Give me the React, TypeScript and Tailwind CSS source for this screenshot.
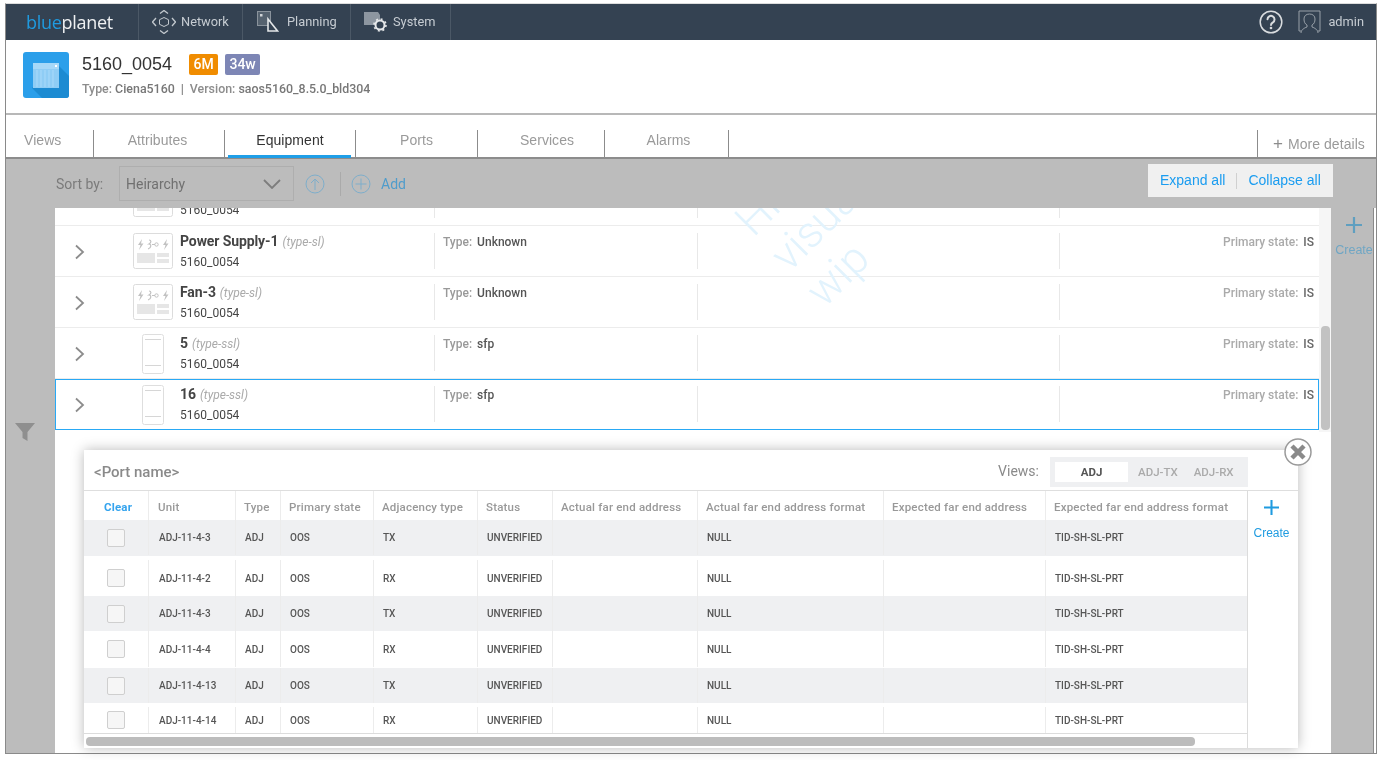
import React from "react";

const roboto = "font-['Roboto',sans-serif]";
const helv = "font-['Liberation_Sans',Arial,sans-serif]";

function NetworkIcon() {
  return (
    <svg width="24" height="24" viewBox="0 0 24 24" fill="none" stroke="#c3c9cf" strokeWidth="1">
      <path d="M12 7.500l4.500 2.200v4.600L12 16.500l-4.500-2.200V9.700z" />
      <path d="M4 8l-3.500 4 3.500 4M20 8l3.500 4-3.500 4M8 3.500l4-3 4 3M8 20.500l4 3 4-3" strokeWidth="1.300" />
    </svg>
  );
}
function PlanningIcon() {
  return (
    <svg width="22" height="22" viewBox="0 0 22 22" fill="none">
      <rect x="0.500" y="0.500" width="13" height="14" fill="#55626f" stroke="#8a939c" />
      <rect x="3" y="3" width="2.500" height="2.500" fill="#cfd3d7" />
      <path d="M11 8v12h9.500z" fill="#344252" stroke="#e3e6e8" strokeWidth="1.600" />
    </svg>
  );
}
function SystemIcon() {
  return (
    <svg width="24" height="22" viewBox="0 0 24 22" fill="none">
      <path d="M0 1h14l2 3h0v10H0z" fill="#8d96a0" />
      <circle cx="16" cy="14" r="4.500" fill="#344252" stroke="#e6e8ea" strokeWidth="2" />
      <circle cx="16" cy="14" r="6" fill="none" stroke="#e6e8ea" strokeWidth="1.600" strokeDasharray="2 2.700" />
    </svg>
  );
}
function HelpIcon() {
  return (
    <svg width="24" height="24" viewBox="0 0 24 24" fill="none" stroke="#d9dcdf" strokeWidth="1.500" strokeLinecap="round">
      <circle cx="12" cy="12" r="10.800" />
      <path d="M8.500 9.300a3.500 3.500 0 1 1 5.400 3c-1.300.800-1.900 1.400-1.900 2.700" strokeWidth="2" />
      <circle cx="12" cy="18" r="0.600" fill="#d9dcdf" />
    </svg>
  );
}
function UserIcon() {
  return (
    <svg width="23" height="24" viewBox="0 0 23 24" fill="none" stroke="#98a0a8" strokeWidth="1">
      <path d="M3 21H1V1h21v20h-2" />
      <path d="M3 23c0-3 3-5 6-6v-2c-2-1-3-3-3-6 0-3 2-5 5.500-5S17 6 17 9c0 3-1 5-3 6v2c3 1 6 3 6 6" />
    </svg>
  );
}
function DeviceBlue() {
  return (
    <svg width="46" height="46" viewBox="0 0 46 46" className="shrink-0">
      <rect width="46" height="46" rx="3" fill="#2b9fea" />
      <path d="M9 36L33 11l13 13v19a3 3 0 0 1-3 3H19z" fill="#1c8bd2" />
      <rect x="10" y="11" width="26" height="25" fill="#8fcdf5" />
      <rect x="10" y="11" width="26" height="6" fill="#a6d8f8" />
      <rect x="32" y="13" width="2" height="2" fill="#fff" />
      <path d="M14 18v17M18 18v17M22 18v17M26 18v17M30 18v17" stroke="#a9dafa" strokeWidth="1" />
    </svg>
  );
}
function Bolt({ x }: { x: number }) {
  return <path d={`M${x + 4} 6l-4 6h2.500l-1.500 5 4.500-6.500h-2.500z`} fill="#c2c2c2" />;
}
function SlotIcon() {
  return (
    <svg width="40" height="36" viewBox="0 0 40 36" className="shrink-0">
      <rect x="0.500" y="0.500" width="39" height="35" rx="2" fill="#fff" stroke="#dcdcdc" />
      <Bolt x={5} />
      <Bolt x={30} />
      <path d="M16 7c2.500 0 2.500 2.500 0 4 2.500 0 2.500 4-1 5M19 11.500h3" stroke="#c2c2c2" fill="none" strokeWidth="1.200" />
      <circle cx="23.500" cy="11.500" r="1.700" fill="none" stroke="#c2c2c2" />
      <rect x="4" y="20" width="18" height="10" fill="#e6e6e6" />
      <rect x="24" y="20" width="12" height="4" fill="#e6e6e6" />
      <rect x="24" y="26" width="12" height="4" fill="#e6e6e6" />
    </svg>
  );
}
function SubSlotIcon() {
  return (
    <svg width="22" height="40" viewBox="0 0 22 40" className="shrink-0">
      <rect x="0.500" y="0.500" width="21" height="39" rx="2" fill="#fff" stroke="#dedede" />
      <path d="M3 5.500h16M3 31.500h16" stroke="#d6d6d6" strokeWidth="1" />
    </svg>
  );
}
function Chevron() {
  return (
    <svg width="12" height="16" viewBox="0 0 12 16" fill="none" stroke="#8c8c8c" strokeWidth="1.800" className="shrink-0">
      <path d="M2 1.500L9 8l-7 6.500" />
    </svg>
  );
}
function PlusMark({ color, size }: { color: string; size: number }) {
  return (
    <svg width={size} height={size} viewBox="0 0 16 16" fill="none" stroke={color} strokeWidth="2.200">
      <path d="M8 0v16M0 8h16" />
    </svg>
  );
}

type Row = { name: string; kind: string; value: string; icon: "slot" | "sub"; selected?: boolean };
const rows: Row[] = [
  { name: "Power Supply-1", kind: "(type-sl)", value: "Unknown", icon: "slot" },
  { name: "Fan-3", kind: "(type-sl)", value: "Unknown", icon: "slot" },
  { name: "5", kind: "(type-ssl)", value: "sfp", icon: "sub" },
  { name: "16", kind: "(type-ssl)", value: "sfp", icon: "sub", selected: true },
];

function ListRow({ row }: { row: Row }) {
  return (
    <div className={"h-[51px] " + (row.selected ? "border border-[#29a9f5]" : "border-b border-[#ececec]")}>
      <div className={"flex h-[51px] items-start " + (row.selected ? "-m-px" : "")}>
        <div className="mt-[18px] w-[78px] shrink-0 pl-[19px]">
          <Chevron />
        </div>
        <div className={`flex w-[40px] shrink-0 justify-center ${row.icon === "slot" ? "mt-[7px]" : "mt-[6px]"}`}>
          {row.icon === "slot" ? <SlotIcon /> : <SubSlotIcon />}
        </div>
        <div className={`w-[261px] shrink-0 pl-[7px] pt-[5px] ${roboto}`}>
          <div className="flex h-[20px] items-baseline gap-[4px]">
            <span className="text-[14px] font-bold tracking-[-0.1px] text-[#444]">{row.name}</span>
            <span className="text-[12px] italic text-[#aaa]">{row.kind}</span>
          </div>
          <div className="mt-[2px] text-[12px] leading-[18px] text-[#444]">5160_0054</div>
        </div>
        <div className={`mt-[7px] flex h-[36px] w-[263px] shrink-0 items-start gap-[5px] border-l border-[#e8e8e8] pl-[8px] pt-[1px] text-[12px] font-medium leading-[16px] ${roboto}`}>
          <span className="text-[#999]">Type:</span>
          <span className="text-[#555]">{row.value}</span>
        </div>
        <div className="mt-[7px] h-[36px] w-[362px] shrink-0 border-l border-[#e8e8e8]" />
        <div className={`mt-[7px] flex h-[36px] flex-1 items-start justify-end gap-[5px] border-l border-[#e8e8e8] pr-[5px] pt-[1px] text-[12px] font-medium leading-[16px] ${roboto}`}>
          <span className="text-[#aaa]">Primary state:</span>
          <span className="text-[#666]">IS</span>
        </div>
      </div>
    </div>
  );
}

const cols = "grid grid-cols-[64px_87px_45px_93px_104px_75px_145px_186px_162px_202px]";
const headers = [
  "Type",
  "Primary state",
  "Adjacency type",
  "Status",
  "Actual far end address",
  "Actual far end address format",
  "Expected far end address",
  "Expected far end address format",
];
const tableRows = [
  { unit: "ADJ-11-4-3", adj: "TX", shade: true, h: "h-[36px] pb-[1px]" },
  { unit: "ADJ-11-4-2", adj: "RX", shade: false, h: "h-[40px] pt-[4px]" },
  { unit: "ADJ-11-4-3", adj: "TX", shade: true, h: "h-[35px]" },
  { unit: "ADJ-11-4-4", adj: "RX", shade: false, h: "h-[37px] pb-[1px]" },
  { unit: "ADJ-11-4-13", adj: "TX", shade: true, h: "h-[35px]" },
  { unit: "ADJ-11-4-14", adj: "RX", shade: false, h: "h-[30px] pt-[4px]" },
];

function Cell({ children }: { children?: React.ReactNode }) {
  return <div className="flex h-full items-center border-l border-[#ececec] pl-[9px]">{children}</div>;
}
function HeadCell({ children }: { children?: React.ReactNode }) {
  return <div className="flex h-full items-center border-l border-[#ececec] pl-[8px] pt-[5px]">{children}</div>;
}

export default function App() {
  return (
    <div className="h-[760px] w-[1384px] overflow-hidden bg-white pl-[5px] pt-[3px] blur-[0.4px]">
      <div className="flex h-[751px] w-[1372px] flex-col border-x border-b border-t border-[#8a8a8a] border-t-[#dddddd]">
        {/* top navigation */}
        <div className={`flex h-[36px] shrink-0 items-stretch bg-[#344252] text-[12.800px] text-[#c6ccd2] ${roboto}`}>
          <div className="flex w-[132px] items-center pl-[20px] font-['Open_Sans',sans-serif] text-[18px] leading-none tracking-[-0.3px]">
            <span className="text-[#1f9be0]">blue</span>
            <span className="text-[#eef0f2]">planet</span>
          </div>
          <div className="flex w-[104px] items-center gap-[5px] border-l border-[#4b5866] pl-[13px]">
            <NetworkIcon />
            <span>Network</span>
          </div>
          <div className="flex w-[108px] items-center gap-[8px] border-l border-[#4b5866] pl-[14px]">
            <PlanningIcon />
            <span>Planning</span>
          </div>
          <div className="flex w-[101px] items-center gap-[5px] border-x border-[#4b5866] pl-[13px]">
            <SystemIcon />
            <span>System</span>
          </div>
          <div className="ml-auto flex items-center pr-[12px]">
            <HelpIcon />
            <div className="ml-[15px]">
              <UserIcon />
            </div>
            <span className="ml-[7px]">admin</span>
          </div>
        </div>

        {/* device header */}
        <div className="flex h-[75px] shrink-0 items-start border-b-2 border-[#b8b8b8] pl-[17px] pt-[12px]">
          <DeviceBlue />
          <div className="ml-[13px]">
            <div className="flex h-[24px] items-center">
              <span className={`text-[18px] text-[#333] ${helv}`}>5160_0054</span>
              <span className={`ml-[17px] flex h-[21px] w-[29px] items-center justify-center rounded-[2px] bg-[#f08c00] text-[14px] font-medium text-white ${roboto}`}>6M</span>
              <span className={`ml-[7px] flex h-[21px] w-[35px] items-center justify-center rounded-[2px] bg-[#7d86b5] text-[14px] font-medium text-white ${roboto}`}>34w</span>
            </div>
            <div className={`mt-[6px] text-[12.400px] font-medium leading-[14px] text-[#8c8c8c] ${roboto}`}>
              <span>Type: </span>
              <span className="text-[#777]">Ciena5160</span>
              <span className="mx-[6px] text-[#777]">|</span>
              <span>Version: </span>
              <span className="text-[#777]">saos5160_8.5.0_bld304</span>
            </div>
          </div>
        </div>

        {/* tabs */}
        <div className={`flex h-[44px] shrink-0 items-end border-b-2 border-[#8c8c8c] text-[14px] tracking-[0.05px] text-[#9a9a9a] ${helv}`}>
          {[
            { t: "Views", w: "w-[88px]", cls: "pl-[18px] justify-start" },
            { t: "Attributes", w: "w-[131px]", cls: "justify-center pr-[3px]" },
            { t: "Equipment", w: "w-[131px]", cls: "justify-center text-[#333]" },
            { t: "Ports", w: "w-[122px]", cls: "justify-center" },
            { t: "Services", w: "w-[127px]", cls: "justify-center pl-[12px]" },
            { t: "Alarms", w: "w-[124px]", cls: "justify-center pl-[4px]" },
          ].map((tab) => (
            <div key={tab.t} className={`relative flex h-[27px] items-start ${tab.w} ${tab.cls} border-r border-[#8c8c8c]`}>
              {tab.t}
              {tab.t === "Equipment" && (
                <span className="absolute bottom-[-1px] left-[3px] right-[4px] h-[3px] bg-[#1f9fe8]" />
              )}
            </div>
          ))}
          <div className="ml-auto flex h-[27px] w-[119px] items-start gap-[5px] border-l border-[#8c8c8c] pl-[15px] pt-[6px] text-[#9a9a9a]">
            <span className="text-[17px] leading-[16px] text-[#8c8c8c]">+</span>
            <span className="leading-[16px]">More details</span>
          </div>
        </div>

        {/* toolbar */}
        <div className="flex h-[49px] shrink-0 items-start bg-[#bcbcbc] pl-[50px] pr-[43px] text-[14px]">
          <div className={`mt-[17px] w-[63px] text-[14px] leading-[16px] text-[#7b7b7b] ${roboto}`}>Sort by:</div>
          <div className={`mt-[7px] flex h-[35px] w-[175px] items-center justify-between border border-[#aeaeae] pl-[6px] pr-[12px] pt-[1px] text-[14px] text-[#707070] ${roboto}`}>
            <span>Heirarchy</span>
            <svg width="18" height="10" viewBox="0 0 18 10" fill="none" stroke="#7d7d7d" strokeWidth="1.800">
              <path d="M1 1l8 8 8-8" />
            </svg>
          </div>
          <div className="ml-[11px] mt-[15px]">
            <svg width="20" height="20" viewBox="0 0 20 20" fill="none" stroke="#7eaecb" strokeWidth="1">
              <circle cx="10" cy="10" r="9" />
              <path d="M10 16V5M6 9l4-4 4 4" />
            </svg>
          </div>
          <div className="ml-[15px] mt-[13px] h-[24px] w-px bg-[#aaaaaa]" />
          <div className="ml-[10px] mt-[15px]">
            <svg width="20" height="20" viewBox="0 0 20 20" fill="none" stroke="#7eaecb" strokeWidth="1">
              <circle cx="10" cy="10" r="9" />
              <path d="M10 4.500v11M4.500 10h11" />
            </svg>
          </div>
          <div className={`ml-[10px] mt-[17px] text-[14px] leading-[16px] text-[#4f9ccb] ${roboto}`}>Add</div>
          <div className={`ml-auto mt-[5px] flex h-[33px] w-[185px] items-center bg-[#f0f0f0] pl-[12px] text-[14px] text-[#1a9cf0] ${helv}`}>
            <span>Expand all</span>
            <span className="ml-[11px] mr-[11px] h-[16px] w-px bg-[#d0d0d0]" />
            <span>Collapse all</span>
          </div>
        </div>

        {/* main */}
        <div className="flex min-h-0 flex-1">
          <div className="flex w-[49px] shrink-0 items-start justify-center bg-[#bcbcbc] pr-[12px] pt-[215px]">
            <svg width="20" height="18" viewBox="0 0 20 18" fill="#8f8f8f">
              <path d="M0 0h20l-7.500 9v9l-5-3V9z" />
            </svg>
          </div>

          <div className="flex w-[1276px] shrink-0 flex-col">
            {/* list */}
            <div className="relative flex h-[224px] shrink-0 overflow-hidden bg-white">
              <div className="w-[1264px] shrink-0">
                <div className="flex h-[18px] items-start overflow-hidden border-b border-[#ececec]">
                  <div className="ml-[78px] mt-[-27px] w-[47px] shrink-0">
                    <SlotIcon />
                  </div>
                  <span className={`mt-[-5px] w-[254px] shrink-0 text-[12px] leading-[14px] text-[#444] ${roboto}`}>5160_0054</span>
                  <div className="h-[10px] w-[263px] shrink-0 border-l border-[#e8e8e8]" />
                  <div className="h-[10px] w-[362px] shrink-0 border-l border-[#e8e8e8]" />
                  <div className="h-[10px] border-l border-[#e8e8e8]" />
                </div>
                {rows.map((r) => (
                  <ListRow key={r.name} row={r} />
                ))}
              </div>
              <div className="flex w-[12px] shrink-0 items-end bg-[#f6f6f6] pb-[2px] pl-[2px]">
                <div className="h-[104px] w-[9px] rounded-[4px] bg-[#c2c2c2]" />
              </div>
              <div className={`pointer-events-none absolute left-[694px] top-[-91px] w-[200px] -rotate-45 text-left text-[44px] font-light leading-[50px] text-[#e2f3fd] ${roboto}`}>
                <div>Hi-fi</div>
                <div>visual</div>
                <div>wip</div>
              </div>
            </div>

            {/* port modal */}
            <div className="min-h-0 flex-1 bg-white pl-[29px] pt-[18px]">
              <div className="relative flex h-[298px] w-[1214px] flex-col bg-white shadow-[0_0_12px_rgba(0,0,0,0.28)]">
                <div className="flex h-[41px] shrink-0 border-b border-[#dedede]">
                  <div className={`pl-[10px] pt-[14px] text-[15px] font-medium leading-[16px] text-[#8a8a8a] ${roboto}`}>&lt;Port name&gt;</div>
                  <div className={`ml-auto mr-[50px] flex items-start ${roboto}`}>
                    <span className="mr-[11px] mt-[13px] text-[14px] leading-[16px] text-[#8a8a8a]">Views:</span>
                    <div className="mt-[7px] flex h-[30px] w-[198px] items-start bg-[#eff0f2] pl-[5px] pt-[5px] text-[11.500px] font-medium leading-[20px] text-[#aaa]">
                      <span className="flex h-[20px] w-[73px] items-center justify-center bg-white font-bold text-[#555]">ADJ</span>
                      <span className="ml-[10px]">ADJ-TX</span>
                      <span className="ml-[16px]">ADJ-RX</span>
                    </div>
                  </div>
                </div>
                <div className="flex min-h-0 flex-1">
                  <div className="flex w-[1164px] shrink-0 flex-col border-r border-[#dcdcdc]">
                    <div className={`${cols} h-[29px] shrink-0 items-center text-[11.500px] font-medium tracking-[0.2px] text-[#999] ${roboto}`}>
                      <div className="flex h-full items-center justify-center pl-[4px] pt-[5px] font-bold text-[#35a4ee]">Clear</div>
                      <HeadCell>
                        <span className="ml-[1px]">Unit</span>
                      </HeadCell>
                      {headers.map((h) => (
                        <HeadCell key={h}>{h}</HeadCell>
                      ))}
                    </div>
                    {tableRows.map((r, i) => (
                      <div
                        key={i}
                        className={`${cols} ${r.h} shrink-0 items-center text-[10px] font-medium text-[#555] ${r.shade ? "bg-[#eff0f2]" : "bg-white"} ${roboto}`}
                      >
                        <div className="flex justify-center">
                          <span className="h-[18px] w-[18px] rounded-[2px] border border-[#cfcfcf] bg-[#f6f6f6]" />
                        </div>
                        <Cell>
                          <span className="ml-[1px]">{r.unit}</span>
                        </Cell>
                        <Cell>ADJ</Cell>
                        <Cell>OOS</Cell>
                        <Cell>{r.adj}</Cell>
                        <Cell>UNVERIFIED</Cell>
                        <Cell />
                        <Cell>NULL</Cell>
                        <Cell />
                        <Cell>TID-SH-SL-PRT</Cell>
                      </div>
                    ))}
                    <div className="flex-1 border-t border-[#dcdcdc] px-[2px] pt-[3px]">
                      <div className="h-[9px] w-[1109px] rounded-[4px] bg-[#bcbcbc]" />
                    </div>
                  </div>
                  <div className={`flex flex-1 flex-col items-center pr-[3px] pt-[9px] text-[12px] leading-[16px] text-[#1f9be0] ${helv}`}>
                    <PlusMark color="#1f9be0" size={15} />
                    <span className="mt-[10px]">Create</span>
                  </div>
                </div>
                <div className="absolute right-[-14px] top-[-12px]">
                  <svg width="28" height="28" viewBox="0 0 28 28" fill="none">
                    <circle cx="14" cy="14" r="13" fill="#fff" stroke="#9a9a9a" strokeWidth="1.500" />
                    <path d="M8 8l12 12M20 8L8 20" stroke="#8a8a8a" strokeWidth="4.500" />
                  </svg>
                </div>
              </div>
            </div>
          </div>

          <div className={`mr-[2px] flex flex-1 flex-col items-center border-r border-[#8a8a8a] bg-[#bcbcbc] pl-[4px] pt-[9px] text-[12.500px] leading-[16px] text-[#6fa6c4] ${helv}`}>
            <PlusMark color="#5f9fc0" size={16} />
            <span className="mt-[9px]">Create</span>
          </div>
        </div>
      </div>
    </div>
  );
}
